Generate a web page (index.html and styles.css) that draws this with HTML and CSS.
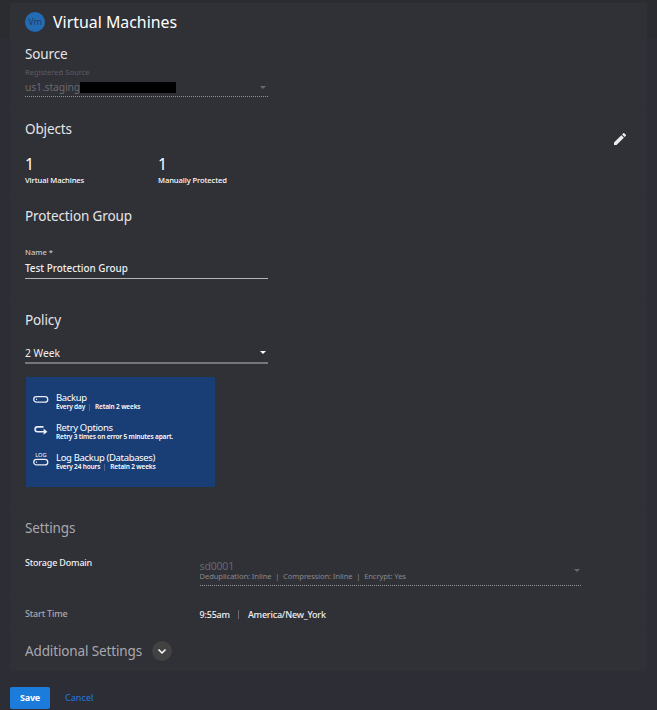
FILE: index.html
```
<!DOCTYPE html>
<html lang="en">
<head>
<meta charset="utf-8">
<title>Virtual Machines</title>
<link rel="stylesheet" href="styles.css">
</head>
<body>
<main class="card">
  <section class="source">
    <div class="title-row"><span class="badge">Vm</span><h1>Virtual Machines</h1></div>
    <h2>Source</h2>
    <div class="field-label muted">Registered Source</div>
    <div class="select disabled"><span class="source-name">us1.staging</span><span class="redacted"></span><span class="arrow"></span></div>
  </section>
  <section class="objects">
    <div class="objects-head"><h2>Objects</h2>
      <svg class="pencil" viewBox="3 3 18 18"><path fill="currentColor" d="M3 17.25V21h3.75L17.81 9.94l-3.75-3.75L3 17.25zM20.71 7.04a1 1 0 0 0 0-1.41l-2.34-2.34a1 1 0 0 0-1.41 0l-1.83 1.83 3.75 3.75 1.83-1.83z"/></svg>
    </div>
    <div class="stats">
      <div><div class="count">1</div><div class="stat-label">Virtual Machines</div></div>
      <div><div class="count">1</div><div class="stat-label">Manually Protected</div></div>
    </div>
  </section>
  <section class="group">
    <h2>Protection Group</h2>
    <div class="field-label name-label">Name *</div>
    <div class="input">Test Protection Group</div>
  </section>
  <section class="policy">
    <h2>Policy</h2>
    <div class="select policy-select"><span>2 Week</span><span class="arrow"></span></div>
    <div class="summary">
      <div class="item">
        <svg viewBox="0 0 16 14"><rect x=".75" y="4.7" width="14" height="5.4" rx="2.7"/><path d="M3 7.4h1"/></svg>
        <div class="item-text"><div class="item-title">Backup</div><div class="item-sub"><span>Every day</span><i></i><span>Retain 2 weeks</span></div></div>
      </div>
      <div class="item">
        <svg viewBox="0 0 16 14"><path class="thick" d="M10.5 4.9H4.5a2.4 2.4 0 0 0 0 4.8h8.5"/><path class="head" d="M10.6 6.6v6.2l3.8-3.1z"/></svg>
        <div class="item-text"><div class="item-title">Retry Options</div><div class="item-sub">Retry 3 times on error 5 minutes apart.</div></div>
      </div>
      <div class="item">
        <svg viewBox="0 0 16 14"><text x="2.2" y="4.5" textLength="11.4" lengthAdjust="spacingAndGlyphs">LOG</text><rect x=".75" y="7.4" width="14" height="5.5" rx="2.75"/><path d="M3 10.15h1"/></svg>
        <div class="item-text"><div class="item-title">Log Backup (Databases)</div><div class="item-sub"><span>Every 24 hours</span><i></i><span>Retain 2 weeks</span></div></div>
      </div>
    </div>
  </section>
  <section class="settings">
    <h2 class="dim">Settings</h2>
    <div class="storage">
      <div class="row-label">Storage Domain</div>
      <div class="domain"><div class="domain-name">sd0001</div><div class="domain-info">Deduplication: Inline&nbsp; |&nbsp; Compression: Inline&nbsp; |&nbsp; Encrypt: Yes</div><span class="arrow"></span></div>
    </div>
  </section>
  <section class="start">
    <div class="row-label dim">Start Time</div>
    <div class="time"><span>9:55am</span><i></i><span>America/New_York</span></div>
  </section>
  <section class="additional">
    <h2 class="dim">Additional Settings</h2>
    <span class="expand"><svg viewBox="0 0 10 10"><path d="M1.5 3.5 5 7l3.5-3.5"/></svg></span>
  </section>
</main>
<footer><button class="save">Save</button><button class="cancel">Cancel</button></footer>
</body>
</html>
```
FILE: styles.css
```
* { box-sizing: border-box; }
body {
  margin: 0;
  height: 710px;
  padding: 3px 10px 0;
  overflow: hidden;
  background: linear-gradient(#2a2c2f 38px, #2d2d35 38px);
  color: #efeff1;
  font-family: "Noto Sans", sans-serif;
  white-space: nowrap;
}
.card { width: 637px; height: 668px; background: #303037; }
section { padding: 0 15px; border-bottom: 1px solid #2e2e35; }
h1, h2 { margin: 0; font-weight: 400; }
h1 { font-size: 15.9px; line-height: 20px; font-weight: 400; color: #fff; }
h2 { font-size: 13.5px; letter-spacing: -0.13px; line-height: 18px; color: #e5e5e8; }
h2.dim, .dim { color: #a9a9ad; }

.source { height: 107px; padding-top: 9px; }
.title-row { display: flex; align-items: center; gap: 8px; height: 20px; margin-bottom: 13px; }
.badge {
  width: 20px; height: 20px; border-radius: 50%;
  background: #236bb3; color: #203c60;
  font-size: 9px; line-height: 20px; text-align: center;
}
.field-label { font-size: 7.6px; line-height: 10px; }
.muted { color: #5d5d64; margin-top: 4px; }
.select { display: flex; align-items: center; width: 243px; font-size: 10.3px; }
.disabled { height: 19px; border-bottom: 1px dotted #929294; color: #696970; margin-top: 1px; }
.source-name { width: 55px; font-size: 10.3px; letter-spacing: -0.1px; }
.redacted { width: 96px; height: 11px; margin-top: 1px; background: #000; }
.arrow {
  width: 0; height: 0; margin-left: auto; margin-right: 2px;
  border: 3.5px solid transparent; border-top-color: currentColor; border-bottom: 0;
}

.objects { height: 87px; padding-top: 10px; }
.objects-head { display: flex; justify-content: space-between; height: 33px; }
.pencil { width: 12px; height: 12px; margin: 13px 6px 0 0; color: #ececee; }
.stats { display: flex; }
.stats > div { width: 133px; }
.count { font-size: 16px; line-height: 22px; color: #fff; }
.stat-label { font-size: 7.6px; letter-spacing: -0.09px; line-height: 11px; font-weight: 500; color: #fff; }

.group { height: 106px; padding-top: 10px; }
.name-label { margin-top: 22px; color: #c8c8cb; font-weight: 500; }
.input { width: 243px; height: 22px; font-size: 9.9px; line-height: 22px; font-weight: 500; border-bottom: 1px solid #b4b4b7; }

.policy { height: 206px; padding-top: 8px; }
.policy-select { height: 23px; margin-top: 12px; padding-top: 2px; border-bottom: 2px solid #77777b; }
.policy-select .arrow { color: #fff; }
.summary { width: 189px; height: 110px; margin: 13px 0 0 1px; padding: 15px 8px 0 7px; background: #193d75; border-radius: 1px; }
.item { display: flex; gap: 7px; height: 30px; color: #fff; }
.item-text { padding-top: 1px; }
.item svg { width: 16px; height: 14px; overflow: visible; fill: none; stroke: #e8edf5; stroke-width: 1.3; }
.item .thick { stroke-width: 1.6; }
.item .head { fill: #e8edf5; stroke: none; }
.item svg text { fill: #fff; stroke: none; font-size: 5.6px; }
.item-title { font-size: 9.5px; letter-spacing: -0.35px; line-height: 10px; }
.item-sub { display: flex; align-items: center; font-size: 6.5px; letter-spacing: -0.16px; line-height: 8px; font-weight: 600; }
i { width: 1px; height: 7px; margin: 0 5px 0 4px; background: #4c658f; }

.settings { height: 90px; padding-top: 10px; }
.storage { display: flex; }
.row-label { width: 174.5px; font-size: 9px; letter-spacing: -0.18px; font-weight: 500; line-height: 12px; }
.storage .row-label { margin-top: 20px; }
.domain { position: relative; width: 381px; height: 27px; margin-top: 22px; border-bottom: 1px dotted #929294; color: #68686f; }
.domain-name { font-size: 10.4px; line-height: 12px; letter-spacing: -0.1px; padding-top: 1px; }
.domain-info { font-size: 7.6px; letter-spacing: -0.09px; line-height: 8px; color: #88888c; }
.domain .arrow { position: absolute; top: 10px; right: -1px; }
.start { height: 31px; display: flex; align-items: center; }
.time { display: flex; align-items: center; font-size: 9px; letter-spacing: -0.2px; font-weight: 500; }
.time i { height: 9px; margin: 0 9px 0 8px; background: #68686d; }
.additional { display: flex; align-items: center; gap: 10px; height: 41px; border: 0; }
.expand { display: flex; align-items: center; justify-content: center; width: 20px; height: 20px; border-radius: 50%; background: #424242; }
.expand svg { width: 10px; height: 10px; fill: none; stroke: #fff; stroke-width: 1.5; }
footer { display: flex; margin-top: 16px; }
button { height: 22px; padding: 0; border: 0; font: 500 9px/22px "Noto Sans", sans-serif; }
.save { width: 40px; border-radius: 2px; background: #1b7cdc; color: #fff; font-weight: 700; letter-spacing: -0.2px; }
.cancel { margin-left: 15px; background: none; color: #2170d2; }
```
